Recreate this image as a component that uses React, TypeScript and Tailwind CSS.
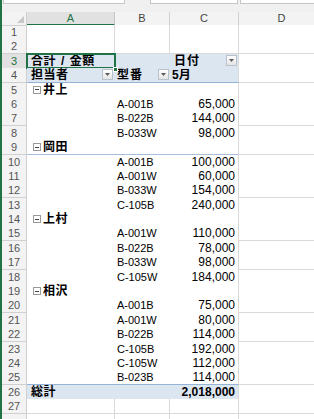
import React from 'react';

type RowKind = 'blank' | 'hdr3' | 'hdr4' | 'group' | 'item' | 'total';

interface SheetRow {
  n: number;
  kind: RowKind;
  name?: string;
  code?: string;
  amount?: string;
}

const groups: { name: string; items: [string, string][] }[] = [
  { name: '井上', items: [['A-001B', '65,000'], ['B-022B', '144,000'], ['B-033W', '98,000']] },
  {
    name: '岡田',
    items: [['A-001B', '100,000'], ['A-001W', '60,000'], ['B-033W', '154,000'], ['C-105B', '240,000']],
  },
  {
    name: '上村',
    items: [['A-001W', '110,000'], ['B-022B', '78,000'], ['B-033W', '98,000'], ['C-105W', '184,000']],
  },
  {
    name: '相沢',
    items: [
      ['A-001B', '75,000'],
      ['A-001W', '80,000'],
      ['B-022B', '114,000'],
      ['C-105B', '192,000'],
      ['C-105W', '112,000'],
      ['B-023B', '114,000'],
    ],
  },
];

const buildRows = (): SheetRow[] => {
  const rows: SheetRow[] = [
    { n: 1, kind: 'blank' },
    { n: 2, kind: 'blank' },
    { n: 3, kind: 'hdr3' },
    { n: 4, kind: 'hdr4' },
  ];
  let n = 5;
  groups.forEach((g) => {
    rows.push({ n: n++, kind: 'group', name: g.name });
    g.items.forEach(([code, amount]) => rows.push({ n: n++, kind: 'item', code, amount }));
  });
  rows.push({ n: n++, kind: 'total', amount: '2,018,000' });
  rows.push({ n: n++, kind: 'blank' });
  rows.push({ n: n++, kind: 'blank' });
  return rows;
};

const GRID = 'grid grid-cols-[25px_88px_55px_69px_86px]';

const DropDown: React.FC<{ className: string }> = ({ className }) => (
  <span
    className={`absolute flex h-[11px] w-[11px] items-center justify-center border border-[#b9c1cb] bg-gradient-to-b from-white to-[#e4e4e4] ${className}`}
  >
    <svg width="5" height="3" viewBox="0 0 5 3">
      <polygon points="0,0 5,0 2.5,3" fill="#5a5a5a" />
    </svg>
  </span>
);

const App: React.FC = () => {
  const rows = buildRows();
  const grid = 'border-r border-b border-[#dadada] bg-white';

  const renderCells = (r: SheetRow) => {
    switch (r.kind) {
      case 'blank':
        return (
          <>
            <div className={grid} />
            <div className={grid} />
            <div className={grid} />
          </>
        );
      case 'hdr3':
        return (
          <>
            <div className="relative bg-[#dce6f1] pl-[4px] font-bold tracking-[0.5px]">
              合計<span className="mx-[5px]">/</span>金額
              <span className="absolute -left-[1px] -top-[1px] h-[16px] w-[90px] border-2 border-[#217346]" />
              <span className="absolute -bottom-[3px] -right-[3px] z-10 h-[5px] w-[5px] border border-white bg-[#217346]" />
            </div>
            <div className="bg-[#dce6f1]" />
            <div className="relative border-r border-[#dadada] bg-[#dce6f1] pl-[4px] font-bold tracking-[1px]">
              日付
              <DropDown className="right-[1px] top-[1px]" />
            </div>
          </>
        );
      case 'hdr4':
        return (
          <>
            <div className="relative border-b border-[#95b3d7] bg-[#dce6f1] pl-[4px] font-bold tracking-[0.5px]">
              担当者
              <DropDown className="right-[2px] top-[1px]" />
            </div>
            <div className="relative border-b border-[#95b3d7] bg-[#dce6f1] pl-[2px] font-bold tracking-[1px]">
              型番
              <DropDown className="right-[1px] top-[1px]" />
            </div>
            <div className="border-r border-b border-r-[#dadada] border-b-[#95b3d7] bg-[#dce6f1] pl-[2px] font-bold">
              5月
            </div>
          </>
        );
      case 'group':
        return (
          <>
            <div className="flex items-center border-b border-[#a7bfdf] bg-white pl-[6px] font-bold tracking-[0.5px]">
              <span className="mr-[2px] flex h-[8px] w-[8px] items-center justify-center border border-[#9a9a9a]">
                <span className="h-px w-[4px] bg-[#444]" />
              </span>
              {r.name}
            </div>
            <div className="border-b border-[#a7bfdf] bg-white" />
            <div className="border-r border-b border-r-[#dadada] border-b-[#a7bfdf] bg-white" />
          </>
        );
      case 'item': {
        const last = r.n === 25;
        const b = last ? 'border-b border-[#95b3d7]' : '';
        return (
          <>
            <div className={`bg-white ${b}`} />
            <div className={`bg-white pl-[2px] text-[11px] ${b}`}>{r.code}</div>
            <div
              className={`border-r border-r-[#dadada] bg-white pr-[3px] text-right ${
                last ? 'border-b border-b-[#95b3d7]' : ''
              }`}
            >
              {r.amount}
            </div>
          </>
        );
      }
      case 'total':
        return (
          <>
            <div className="border-b border-[#dadada] bg-[#dce6f1] pl-[4px] font-bold tracking-[0.5px]">総計</div>
            <div className="border-b border-[#dadada] bg-[#dce6f1]" />
            <div className="border-r border-b border-[#dadada] bg-[#dce6f1] pr-[3px] text-right font-bold">
              {r.amount}
            </div>
          </>
        );
    }
  };

  return (
    <div className="flex h-[419px] w-[314px] overflow-hidden bg-[#f0f0f0] font-['Liberation_Sans','Noto_Sans_CJK_JP',sans-serif] text-[12px] leading-[14px] text-black">
      <div className="w-[2px] shrink-0 bg-[#217346]" />
      <div className="flex min-w-0 flex-1 flex-col">
        {/* name box / formula bar edges */}
        <div className="flex h-[4px] shrink-0">
          <div className="ml-[1px] w-[122px] border-x border-b border-[#c6c6c6] bg-white" />
          <div className="ml-[25px] w-[88px] border-x border-b border-[#c6c6c6] bg-white" />
          <div className="ml-[2px] flex-1 border-l border-b border-[#c6c6c6] bg-white" />
        </div>
        <div className="h-[8px] shrink-0" />

        {/* column headers */}
        <div className={`${GRID} h-[13px] shrink-0 text-[11px] leading-[12px] text-[#444]`}>
          <div className="relative border-r border-b border-[#d0d0d0] bg-[#f3f3f3]">
            <svg className="absolute bottom-[2px] right-[2px]" width="7" height="7" viewBox="0 0 7 7">
              <polygon points="7,0 7,7 0,7" fill="#c8c8c8" />
            </svg>
          </div>
          <div className="border-r border-b-2 border-r-[#c6c6c6] border-b-[#217346] bg-[#e1e1e1] text-center text-[#217346]">
            A
          </div>
          <div className="border-r border-b border-[#d0d0d0] bg-[#f3f3f3] text-center">B</div>
          <div className="border-r border-b border-[#d0d0d0] bg-[#f3f3f3] text-center">C</div>
          <div className="border-r border-b border-[#d0d0d0] bg-[#f3f3f3] text-center">D</div>
        </div>

        {rows.map((r) => (
          <div key={r.n} className={`${GRID} h-[14.4px] shrink-0`}>
            <div
              className={`border-r border-b text-center text-[11px] ${
                r.n === 3
                  ? 'border-r-[#217346] border-b-[#d0d0d0] bg-[#e1e1e1] text-[#217346]'
                  : 'border-[#d0d0d0] bg-[#f3f3f3] text-[#555]'
              }`}
            >
              {r.n < 28 ? r.n : ''}
            </div>
            {renderCells(r)}
            <div className={grid} />
          </div>
        ))}
      </div>
    </div>
  );
};

export default App;
